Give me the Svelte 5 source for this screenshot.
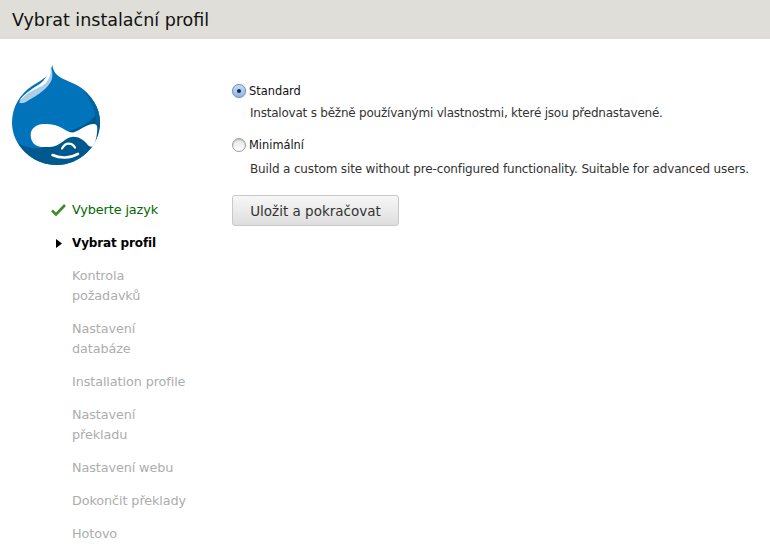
<script>
  const steps = [
    { label: 'Vyberte jazyk', state: 'done' },
    { label: 'Vybrat profil', state: 'active' },
    { label: 'Kontrola požadavků' },
    { label: 'Nastavení databáze' },
    { label: 'Installation profile' },
    { label: 'Nastavení překladu' },
    { label: 'Nastavení webu' },
    { label: 'Dokončit překlady' },
    { label: 'Hotovo' }
  ];
</script>

<div class="page">
  <header><h1>Vybrat instalační profil</h1></header>
  <div class="body">
    <aside>
      <svg class="logo" viewBox="0 0 88 100" width="88" height="100" aria-label="Drupal">
        <path fill="#0073ba" d="M40.3 0C41 5 43 9 47 11.5C52 15 60 17 68 22C79 30 88 42 88 57C88 81 68 100 44.5 100C20 100 0 80 0 58C0 42 8 29 20 21C30 15 38 11 40.3 0Z"/>
        <path fill="#00598e" d="M6 78C14 83 22 84 30 83L58 66C68 62 80 58 85 47C87 50 88 54 88 57C88 81 68 100 44.5 100C28 100 14 91 6 78Z"/>
        <path fill="#0063a0" d="M68 22C79 30 88 42 88 57L85 60C84 46 78 32 68 22Z"/>
        <path fill="#a9cfe9" d="M7 37.5C10 31 18 25 28 19C34 15 37 9 39 2C41 8 41 14 38 18C33 26 22 32 14 37C11 38.5 9 38.5 7 37.5Z"/>
        <path fill="#fff" d="M7.5 35.5C11 30 18 25 28 19C33 15 36 9 38.5 3.5C39.5 9 37 14 34 18C28 23 22 24 15 29C12 31 10 34 7.5 35.5Z"/>
        <path fill="#fff" d="M18.7 70C18.7 63 25 59 31.3 59C38 58.5 45 60 50 63C54 65.5 57 67.5 61 67.5C67 66 73 60 81 59C84 58.5 85.5 60 85.3 63.5C85 70 84 77 81 81C79 82.5 77 81.5 75 79C72 75 67 71.7 61.3 71.7C57 71.7 54 74 51 76.5C46 80 43 81.7 38 82C34 82.2 31 82.2 28 81.7C23 81 18.7 77 18.7 70Z"/>
        <path fill="none" stroke="#fff" stroke-width="2.2" stroke-linecap="round" d="M50 83.5C52 80 54 78.6 56.5 78.6C59 78.6 61.5 80 63 82.5"/>
        <path fill="none" stroke="#fff" stroke-width="2.6" stroke-linecap="round" d="M40.5 90C48 93.5 58 93.5 66 88.8"/>
      </svg>
      <ol>
        {#each steps as s}
          <li class={s.state ?? ''}>
            {#if s.state === 'done'}
              <svg class="mark" viewBox="0 0 15 12" width="15" height="12"><path fill="none" stroke="#3f8a2e" stroke-width="2.6" d="M1 6.5L5 10.5L14 1"/></svg>
            {:else if s.state === 'active'}
              <svg class="mark arrow" viewBox="0 0 6 9" width="6" height="9"><path fill="#000" d="M0 0L6 4.5L0 9Z"/></svg>
            {/if}
            {s.label}
          </li>
        {/each}
      </ol>
    </aside>
    <main>
      <div class="option">
        <div class="choice"><span class="radio on"></span><span>Standard</span></div>
        <p class="tight">Instalovat s běžně používanými vlastnostmi, které jsou přednastavené.</p>
      </div>
      <div class="option second">
        <div class="choice"><span class="radio"></span><span>Minimální</span></div>
        <p class="loose">Build a custom site without pre-configured functionality. Suitable for advanced users.</p>
      </div>
      <button type="button">Uložit a pokračovat</button>
    </main>
  </div>
</div>

<style>
  :global(body) { margin: 0; background: #fff; }
  .page { font-family: "DejaVu Sans", sans-serif; width: 770px; height: 555px; overflow: hidden; color: #333; }
  header { background: #dfded8; height: 39px; display: flex; align-items: center; padding-left: 12px; }
  h1 { margin: 0; font-size: 17.5px; font-weight: 400; color: #111; }
  .body { display: flex; }
  aside { width: 232px; flex: none; padding: 26px 0 0 12px; box-sizing: border-box; }
  .logo { display: block; }
  ol { list-style: none; margin: 35px 0 0; padding: 0 0 0 60px; font-size: 12.8px; line-height: 20px; color: #adadad; letter-spacing: -0.1px; }
  li { position: relative; margin-bottom: 13px; width: 118px; }
  li.done { color: #006a00; }
  li.active { color: #000; font-weight: 700; font-size: 12px; letter-spacing: -0.15px; }
  .mark { position: absolute; left: -21px; top: 4px; }
  .mark.arrow { left: -16px; top: 6px; }
  main { padding-top: 45px; font-size: 12px; }
  .option { margin-bottom: 17px; }
  .choice { display: flex; align-items: center; gap: 3px; height: 14px; color: #111; font-size: 11.4px; }
  p { margin: 8px 0 0 18px; line-height: 15px; color: #333; white-space: nowrap; }
  .second p { margin-top: 10px; }
  .tight { letter-spacing: -0.22px; }
  .loose { letter-spacing: -0.15px; }
  .radio { width: 12px; height: 12px; border-radius: 50%; border: 1px solid #a0a0a0; background: linear-gradient(#e4e4e4, #fff); box-shadow: inset 0 1px 1px #bbb; position: relative; }
  .radio.on { background: linear-gradient(#c9dcf2, #8fb5e6); border-color: #6c8fbd; box-shadow: 0 0 1px #7fa6dc; }
  .radio.on::after { content: ""; position: absolute; left: 4px; top: 4px; width: 4px; height: 4px; border-radius: 50%; background: #1a2a40; }
  button { display: block; width: 167px; height: 31px; margin-top: 18px; padding: 0; font: inherit; font-size: 13.5px; color: #333; border: 1px solid #c8c8c8; border-radius: 3px; background: linear-gradient(#f7f7f7, #dedede); }
</style>
